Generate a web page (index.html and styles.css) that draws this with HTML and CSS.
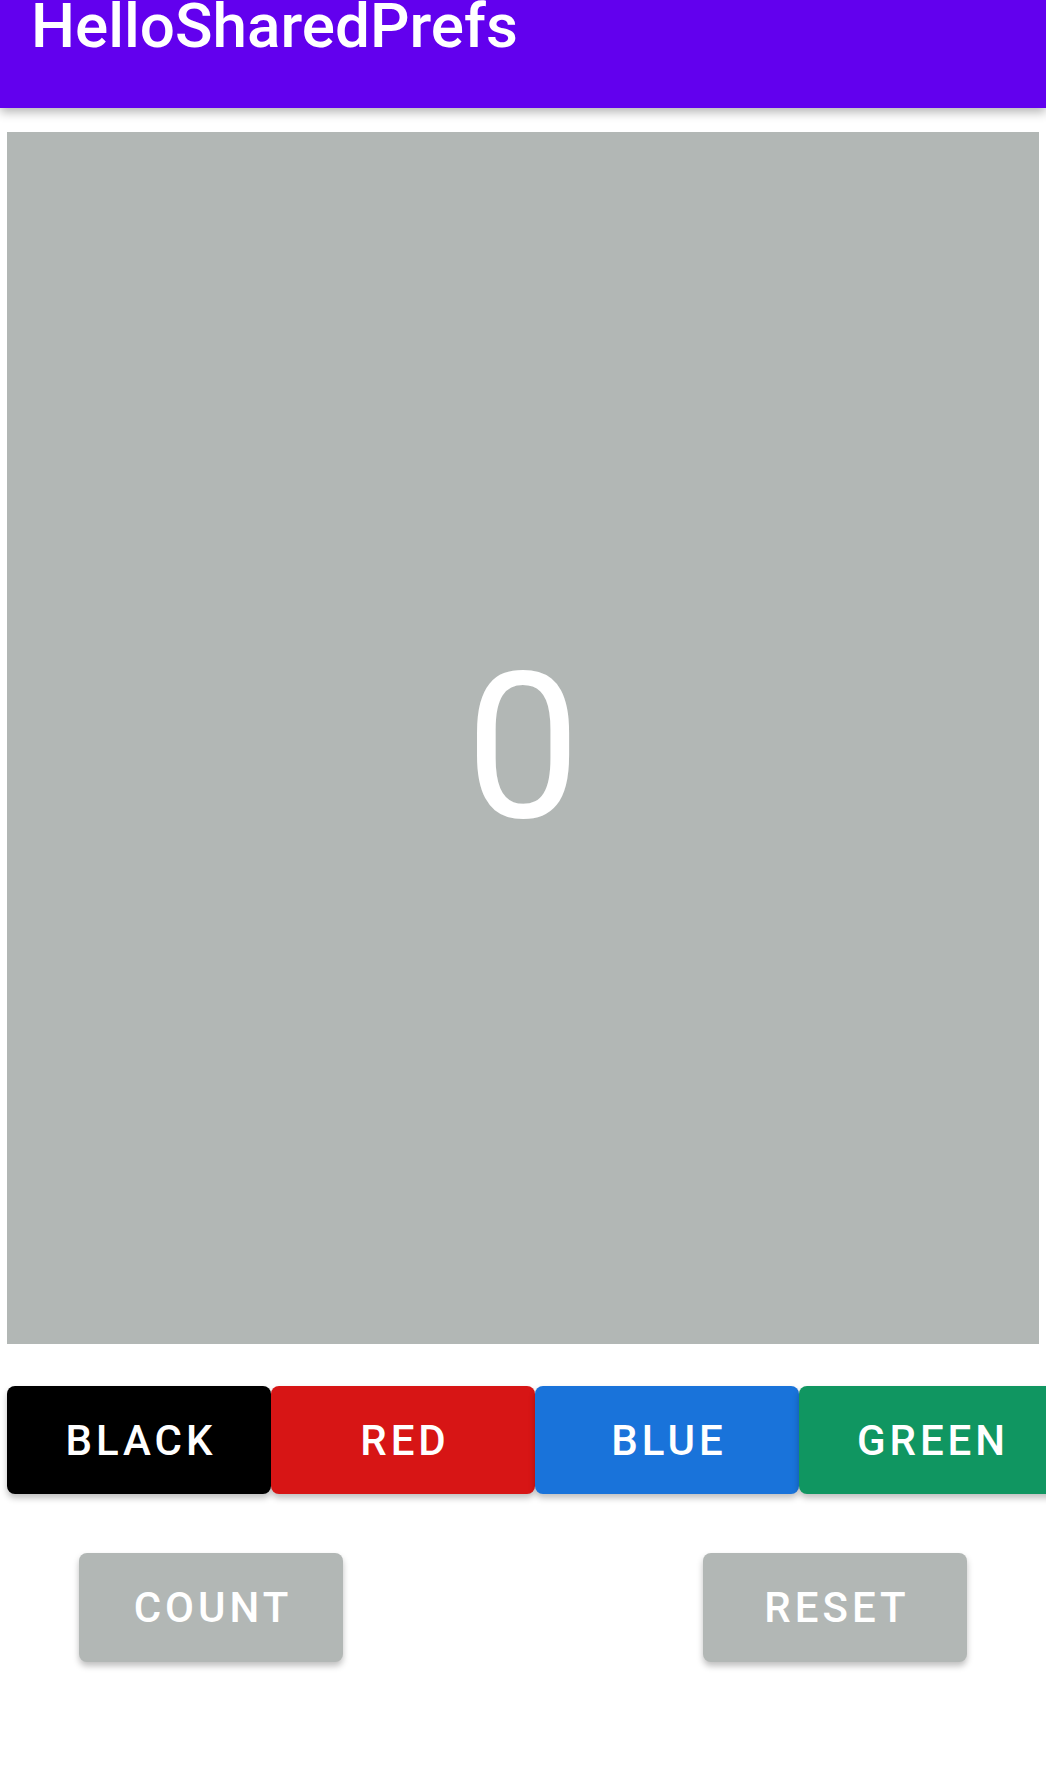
FILE: index.html
```html
<!DOCTYPE html>
<html>
<head>
<meta charset="utf-8">
<link rel="stylesheet" href="styles.css">
</head>
<body>
<header class="appbar">
  <h1 class="title">HelloSharedPrefs</h1>
</header>
<main class="content">
  <div class="count-box"><span class="count-value">0</span></div>
  <div class="color-row">
    <button class="btn color-btn black">BLACK</button>
    <button class="btn color-btn red">RED</button>
    <button class="btn color-btn blue">BLUE</button>
    <button class="btn color-btn green">GREEN</button>
  </div>
  <div class="action-row">
    <button class="btn action-btn">COUNT</button>
    <button class="btn action-btn">RESET</button>
  </div>
</main>
</body>
</html>
```
FILE: styles.css
```css
html, body {
  margin: 0;
  padding: 0;
  background: #ffffff;
  width: 1046px;
  height: 1788px;
  overflow: hidden;
  font-family: Roboto, "Noto Sans", sans-serif;
}

.appbar {
  height: 108px;
  background: #6200ee;
  box-shadow: 0 4px 10px rgba(0, 0, 0, 0.3);
  position: relative;
  z-index: 1;
}

.title {
  margin: 0;
  padding-left: 31px;
  font-size: 62px;
  font-weight: 500;
  line-height: 52px;
  color: #ffffff;
}

.content {
  padding: 24px 7px 0 7px;
}

.count-box {
  height: 1212px;
  background: #b2b7b5;
  display: flex;
  align-items: center;
  justify-content: center;
  padding-top: 18px;
  box-sizing: border-box;
}

.count-value {
  font-size: 205px;
  color: #ffffff;
  font-weight: 400;
}

.btn {
  font-family: Roboto, "Noto Sans", sans-serif;
  font-weight: 500;
  font-size: 42px;
  letter-spacing: 0.095em;
  color: #ffffff;
  border: none;
  border-radius: 8px;
  width: 264px;
  height: 108px;
  flex: none;
  padding: 0 0 0 4px;
  box-shadow: 0 4px 6px rgba(0, 0, 0, 0.25);
}

.color-row {
  display: flex;
  margin-top: 42px;
  margin-right: -7px;
  overflow: visible;
}

.black { background: #000000; }
.red { background: #d71515; }
.blue { background: #1973da; }
.green { background: #109661; }

.action-row {
  display: flex;
  justify-content: space-between;
  padding: 0 72px;
  margin-top: 59px;
}

.action-btn {
  background: #b2b7b5;
  height: 109px;
}
```
